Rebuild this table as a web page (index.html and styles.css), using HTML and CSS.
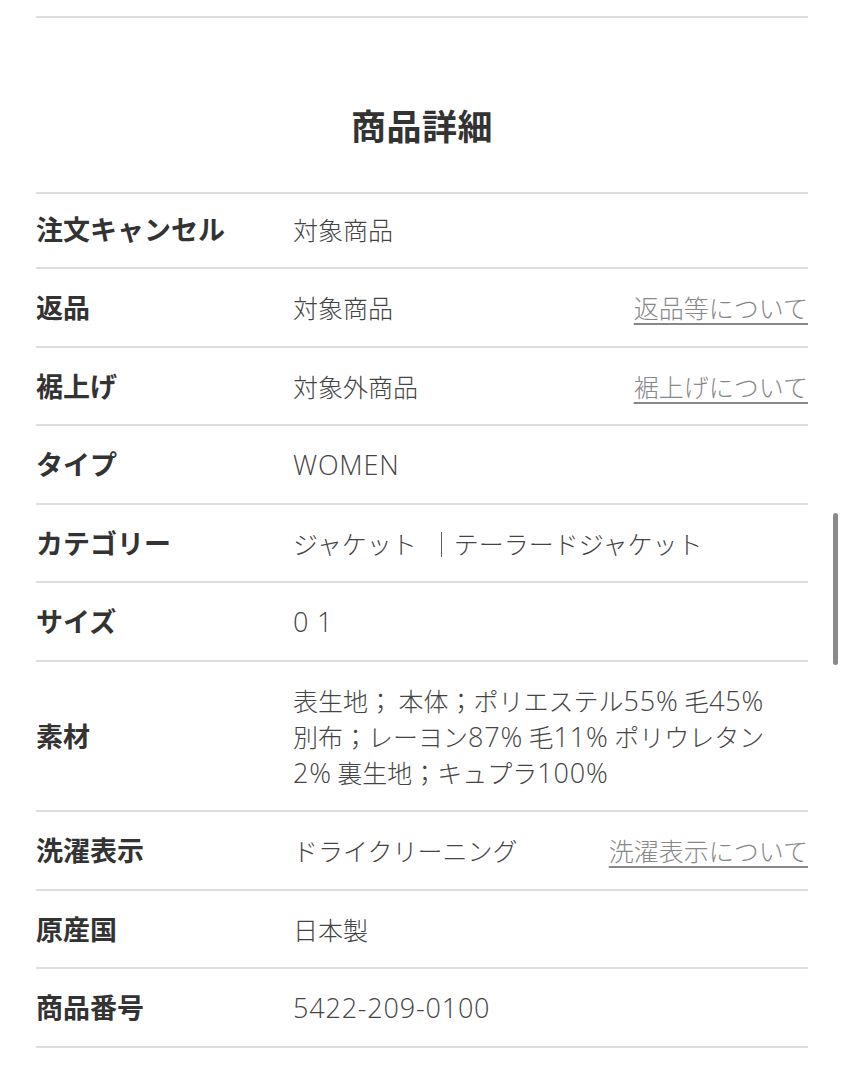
FILE: index.html
```html
<!DOCTYPE html>
<html lang="ja">
<head>
<meta charset="utf-8">
<title>商品詳細</title>
<link rel="stylesheet" href="styles.css">
</head>
<body>
<div class="page">
  <section class="details">
    <h2 class="title">商品詳細</h2>
    <dl class="spec">
      <div class="row row-first">
        <dt class="label">注文キャンセル</dt>
        <dd class="value">対象商品</dd>
      </div>
      <div class="row">
        <dt class="label">返品</dt>
        <dd class="value">対象商品</dd>
        <dd class="link"><a href="#">返品等について</a></dd>
      </div>
      <div class="row">
        <dt class="label">裾上げ</dt>
        <dd class="value">対象外商品</dd>
        <dd class="link"><a href="#">裾上げについて</a></dd>
      </div>
      <div class="row">
        <dt class="label">タイプ</dt>
        <dd class="value"><span class="latin">WOMEN</span></dd>
      </div>
      <div class="row">
        <dt class="label">カテゴリー</dt>
        <dd class="value">ジャケット<span class="sep">｜</span>テーラードジャケット</dd>
      </div>
      <div class="row">
        <dt class="label">サイズ</dt>
        <dd class="value"><span class="latin">0 1</span></dd>
      </div>
      <div class="row">
        <dt class="label">素材</dt>
        <dd class="value">表生地； 本体；ポリエステル<span class="latin">55%</span> 毛<span class="latin">45%</span><br>別布；レーヨン<span class="latin">87%</span> 毛<span class="latin">11%</span> ポリウレタン<br><span class="latin">2%</span> 裏生地；キュプラ<span class="latin">100%</span></dd>
      </div>
      <div class="row">
        <dt class="label">洗濯表示</dt>
        <dd class="value">ドライクリーニング</dd>
        <dd class="link"><a href="#">洗濯表示について</a></dd>
      </div>
      <div class="row">
        <dt class="label">原産国</dt>
        <dd class="value">日本製</dd>
      </div>
      <div class="row">
        <dt class="label">商品番号</dt>
        <dd class="value"><span class="latin">5422-209-0100</span></dd>
      </div>
    </dl>
  </section>
  <div class="scrollbar"></div>
</div>
</body>
</html>
```
FILE: styles.css
```css
html, body {
  margin: 0;
  padding: 0;
  background: #fff;
}

body {
  font-family: "Noto Sans CJK JP", "Noto Sans", sans-serif;
  color: #333;
}

.page {
  padding: 16px 36px 0;
  min-height: 1080px;
  box-sizing: border-box;
}

.details {
  border-top: 2px solid #dedede;
}

.title {
  margin: 0;
  padding: 82px 0 42px;
  text-align: center;
  font-size: 35px;
  line-height: 50px;
  font-weight: 700;
  letter-spacing: 0.5px;
  color: #333;
}

.spec {
  margin: 0;
  border-top: 2px solid #dedede;
}

.row {
  display: flex;
  align-items: center;
  padding: 20.25px 0;
  border-bottom: 2px solid #dedede;
}

.row-first {
  padding: 17px 0 20px;
}

.label {
  flex: 0 0 257px;
  margin: 0;
  font-size: 27px;
  line-height: 36px;
  font-weight: 700;
  color: #333;
}

.value {
  flex: 1 1 auto;
  margin: 0;
  font-size: 25px;
  line-height: 36px;
  font-weight: 300;
  color: #444;
}

.latin {
  font-family: "Open Sans", "Noto Sans CJK JP", sans-serif;
  font-size: 27px;
  line-height: 1;
  font-weight: 300;
  letter-spacing: 0.8px;
}

.sep {
  display: inline-block;
  margin: 0 0 0 12px;
  color: #555;
  will-change: transform;
}

.link {
  flex: 0 0 auto;
  margin: 0;
  font-size: 25px;
  line-height: 36px;
  font-weight: 300;
}

.link a {
  color: #888;
  text-decoration: underline;
  text-decoration-thickness: 2px;
  text-underline-offset: 5px;
}

.scrollbar {
  position: absolute;
  left: 833px;
  top: 513px;
  width: 5px;
  height: 152px;
  border-radius: 3px;
  background: #8a8a8a;
}
```
